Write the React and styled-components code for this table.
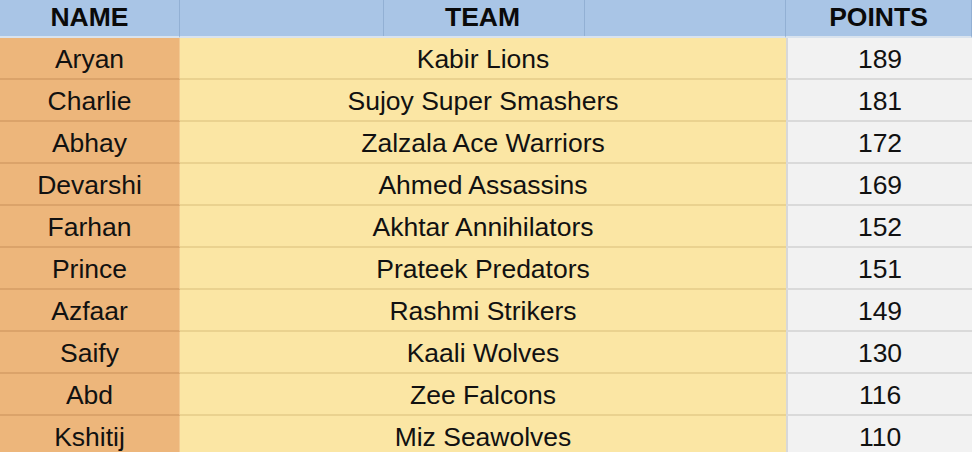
import React from 'react'
import styled, { createGlobalStyle } from 'styled-components'

const rows = [
  ['Aryan', 'Kabir Lions', 189],
  ['Charlie', 'Sujoy Super Smashers', 181],
  ['Abhay', 'Zalzala Ace Warriors', 172],
  ['Devarshi', 'Ahmed Assassins', 169],
  ['Farhan', 'Akhtar Annihilators', 152],
  ['Prince', 'Prateek Predators', 151],
  ['Azfaar', 'Rashmi Strikers', 149],
  ['Saify', 'Kaali Wolves', 130],
  ['Abd', 'Zee Falcons', 116],
  ['Kshitij', 'Miz Seawolves', 110],
]

const App = () => {
  return (
    <>
      <Global />
      <Sheet>
        <HeadCell>NAME</HeadCell>
        <HeadCell $split>TEAM</HeadCell>
        <HeadCell>POINTS</HeadCell>
        {rows.map(([name, team, pts]) => (
          <React.Fragment key={name}>
            <NameCell>{name}</NameCell>
            <TeamCell>{team}</TeamCell>
            <PointsCell>{pts}</PointsCell>
          </React.Fragment>
        ))}
      </Sheet>
    </>
  )
}

export default App

const Global = createGlobalStyle`
  html, body {
    margin: 0;
    padding: 0;
    height: 452px;
    overflow: hidden;
    background: #f2f2f2;
  }
`

const Sheet = styled.div`
  display: grid;
  grid-template-columns: 180px 606px 1fr;
  grid-template-rows: 38px;
  grid-auto-rows: 42px;
  width: 972px;
  font-family: "Liberation Sans", Arial, sans-serif;
  font-size: 26.5px;
  color: #111;
`

const Cell = styled.div`
  display: flex;
  align-items: center;
  justify-content: center;
  box-sizing: border-box;
  white-space: nowrap;
  padding-top: 3px;
`

const HeadCell = styled(Cell)`
  background-color: #a9c5e6;
  font-weight: bold;
  color: #0a0a0a;
  border-bottom: 2px solid #d9e3ee;
  border-right: 1px solid #92b0d4;
  padding-top: 0;
  padding-bottom: 1px;
  ${p => p.$split && `
    background-image:
      linear-gradient(#92b0d4, #92b0d4),
      linear-gradient(#92b0d4, #92b0d4);
    background-size: 1px 100%, 1px 100%;
    background-position: 203px 0, 404px 0;
    background-repeat: no-repeat;
  `}
  &:last-of-type { border-right: none; }
`

const NameCell = styled(Cell)`
  background: #edb67b;
  border-bottom: 2px solid #dba36a;
  border-right: 1px solid #f3c991;
`

const TeamCell = styled(Cell)`
  background: #fbe6a4;
  border-bottom: 2px solid #ead28f;
`

const PointsCell = styled(Cell)`
  background: #f2f2f2;
  border-bottom: 2px solid #dadada;
  border-left: 2px solid #d8d8d8;
`
